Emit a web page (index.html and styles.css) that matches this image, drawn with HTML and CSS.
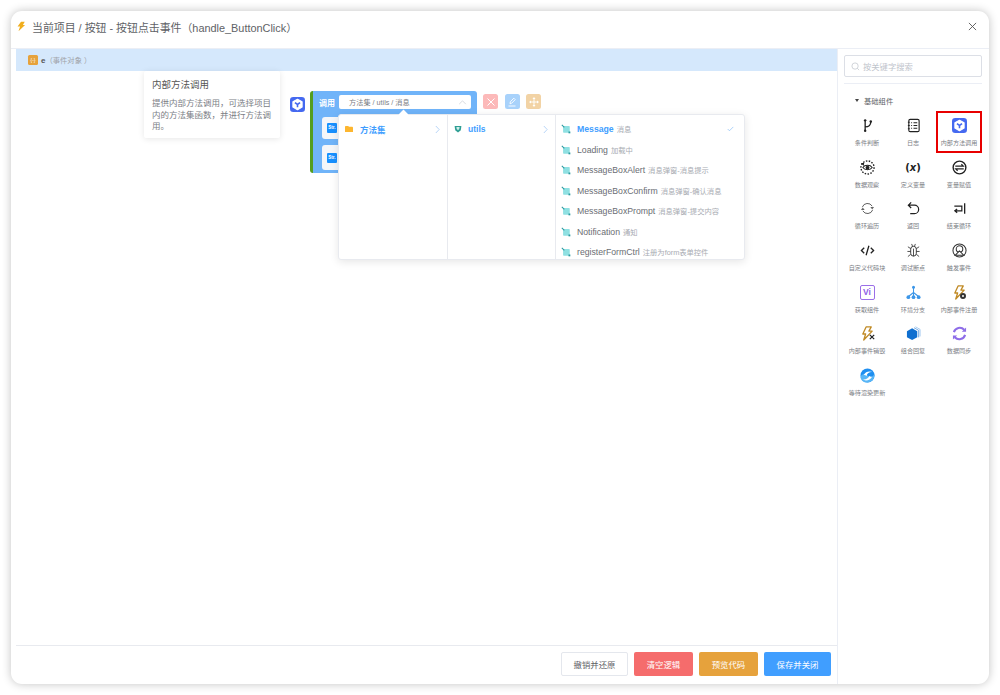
FILE: index.html
```html
<!DOCTYPE html>
<html lang="zh">
<head>
<meta charset="utf-8">
<title>按钮点击事件</title>
<link rel="stylesheet" href="styles.css">
</head>
<body>
<svg class="defs" width="0" height="0">
  <defs>
    <symbol id="logo" viewBox="0 0 16 16">
      <rect width="16" height="16" rx="3.5" fill="#4569f0"/>
      <path d="M8 2.4 12.9 5v5.8L8 13.6 3.1 10.800V5z" fill="#fff" stroke="#fff" stroke-width="1.200" stroke-linejoin="round"/>
      <path d="M5.300 5.900 8 8l2.700-2.100M8 8v3" fill="none" stroke="#4569f0" stroke-width="1.700"/>
    </symbol>
    <symbol id="bolt" viewBox="0 0 16 16">
      <path d="M8 .5h6l-3 5h3.500L4 15.500l2.500-7.500H2.500z" fill="#f0ae1e"/>
    </symbol>
    <symbol id="fn" viewBox="0 0 12 12">
      <rect x="2.500" y="2.500" width="8" height="8" rx=".8" fill="#8fe0e2"/>
      <path d="M1 1 4 4" stroke="#2b9aa0" stroke-width="1.300"/>
      <rect x="9" y="9" width="2.200" height="2.200" fill="#2b9aa0"/>
    </symbol>
    <symbol id="bolt-line" viewBox="0 0 16 16">
      <path d="M6.500 1H12L9.500 5.500H13L4 15l2-6.500H3z" fill="none" stroke="#c08a25" stroke-width="1.400" stroke-linejoin="round"/>
    </symbol>
  </defs>
</svg>

<div class="window">
  <header class="head">
    <svg class="head-bolt"><use href="#bolt"/></svg>
    <span class="head-title">当前项目 / 按钮 - 按钮点击事件（handle_ButtonClick）</span>
    <svg class="head-close" viewBox="0 0 10 10"><path d="M1 1l8 8M9 1l-8 8" stroke="#555" stroke-width="1" fill="none"/></svg>
  </header>

  <div class="body">
    <main class="main">
      <div class="event">
        <span class="event-icon">{-}</span>
        <b class="event-name">e</b>
        <span class="event-desc">（事件对象 ）</span>
      </div>

      <div class="canvas">
        <div class="tip">
          <div class="tip-title">内部方法调用</div>
          <p class="tip-text">提供内部方法调用，可选择项目内的方法集函数，并进行方法调用。</p>
        </div>

        <span class="node-logo"><svg class="logo-svg"><use href="#logo"/></svg></span>

        <div class="block">
          <div class="block-top">
            <span class="block-label">调用</span>
            <div class="select">
              <span>方法集 / utils / 消息</span>
              <svg class="select-arrow" viewBox="0 0 10 6"><path d="M1 5l4-4 4 4" fill="none" stroke="#c6c9cf" stroke-width=".8"/></svg>
            </div>
          </div>
          <div class="param"><span class="str">Str.</span></div>
          <div class="param param-tall"><span class="str">Str.</span></div>
        </div>

        <div class="actions">
          <span class="act act-red"><svg viewBox="0 0 10 10"><path d="M1.500 1.500l7 7M8.500 1.500l-7 7" stroke="#fff" stroke-width="1"/></svg></span>
          <span class="act act-blue"><svg viewBox="0 0 10 10"><path d="M3 6.800l.3-2L6.800 1.200 8.200 2.600 4.700 6.200zM1.500 9h7" stroke="#fff" stroke-width=".9" fill="none"/></svg></span>
          <span class="act act-orange"><svg viewBox="0 0 10 10"><path d="M5 1.500v7M1.500 5h7" stroke="#fff" stroke-width=".9"/><path d="M5 0 6.500 2h-3zM5 10 3.500 8h3zM0 5l2-1.500v3zM10 5 8 3.500v3z" fill="#fff"/></svg></span>
        </div>

        <div class="cascader">
          <span class="caret"></span>
          <ul class="col col-a">
            <li class="c-item active">
              <svg class="folder" viewBox="0 0 10 8"><path d="M0 1a1 1 0 0 1 1-1h3l1 1h4a1 1 0 0 1 1 1v5a1 1 0 0 1-1 1H1a1 1 0 0 1-1-1z" fill="#fdb62f"/></svg>
              <span class="c-name">方法集</span>
              <svg class="chev" viewBox="0 0 6 10"><path d="M1 .8 5 5 1 9.200" fill="none" stroke="#a9cdf5" stroke-width="1"/></svg>
            </li>
          </ul>
          <ul class="col col-b">
            <li class="c-item active">
              <svg class="shield" viewBox="0 0 10 10"><path d="M.8 1.200h8.400L8.500 6.500 5 9.500 1.500 6.500z" fill="#2f9e94"/><path d="M3 2.500h4L6.600 5 5 6.500 3.400 5z" fill="#cfeee9"/></svg>
              <span class="c-name">utils</span>
              <svg class="chev" viewBox="0 0 6 10"><path d="M1 .8 5 5 1 9.200" fill="none" stroke="#a9cdf5" stroke-width="1"/></svg>
            </li>
          </ul>
          <ul class="col col-c">
            <li class="m-item active"><svg class="fn"><use href="#fn"/></svg><span class="m-name">Message</span><span class="m-desc">消息</span><svg class="check" viewBox="0 0 10 8"><path d="M1 4l2.500 2.500L9 1" fill="none" stroke="#7db8f5" stroke-width=".9"/></svg></li>
            <li class="m-item"><svg class="fn"><use href="#fn"/></svg><span class="m-name">Loading</span><span class="m-desc">加载中</span></li>
            <li class="m-item"><svg class="fn"><use href="#fn"/></svg><span class="m-name">MessageBoxAlert</span><span class="m-desc">消息弹窗-消息提示</span></li>
            <li class="m-item"><svg class="fn"><use href="#fn"/></svg><span class="m-name">MessageBoxConfirm</span><span class="m-desc">消息弹窗-确认消息</span></li>
            <li class="m-item"><svg class="fn"><use href="#fn"/></svg><span class="m-name">MessageBoxPrompt</span><span class="m-desc">消息弹窗-提交内容</span></li>
            <li class="m-item"><svg class="fn"><use href="#fn"/></svg><span class="m-name">Notification</span><span class="m-desc">通知</span></li>
            <li class="m-item"><svg class="fn"><use href="#fn"/></svg><span class="m-name">registerFormCtrl</span><span class="m-desc">注册为form表单控件</span></li>
          </ul>
        </div>
      </div>

      <footer class="foot">
        <button class="btn btn-plain">撤销并还原</button>
        <button class="btn btn-red">清空逻辑</button>
        <button class="btn btn-orange">预览代码</button>
        <button class="btn btn-blue">保存并关闭</button>
      </footer>
    </main>

    <aside class="side">
      <div class="search">
        <svg class="search-icon" viewBox="0 0 10 10"><circle cx="4.500" cy="4.500" r="3.500" fill="none" stroke="#c0c4cc" stroke-width=".8"/><path d="M7 7l2 2" stroke="#c0c4cc" stroke-width=".8"/></svg>
        <span>按关键字搜索</span>
      </div>
      <div class="side-title"><i class="tri"></i>基础组件</div>
      <div class="grid">
        <div class="cell">
          <svg class="ic" viewBox="0 0 16 16"><circle cx="5.500" cy="2.500" r="1.300" fill="#222"/><circle cx="5.500" cy="13.500" r="1.300" fill="#222"/><circle cx="11.500" cy="3.800" r="1.300" fill="#222"/><path d="M5.500 3v10M5.500 9.500c3.500 0 6-1.500 6-5.500" fill="none" stroke="#222" stroke-width="1.400"/></svg>
          <span>条件判断</span>
        </div>
        <div class="cell">
          <svg class="ic" viewBox="0 0 16 16"><rect x="3" y="1.500" width="11" height="13" rx="1.500" fill="none" stroke="#222" stroke-width="1.200"/><path d="M5.500 5h1M8 5h4M5.500 8h1M8 8h4M5.500 11h1M8 11h4M2 4.500h2M2 8h2M2 11.500h2" stroke="#222" stroke-width="1.100"/></svg>
          <span>日志</span>
        </div>
        <div class="cell cell-on">
          <svg class="ic"><use href="#logo"/></svg>
          <span>内部方法调用</span>
        </div>

        <div class="cell">
          <svg class="ic" viewBox="0 0 16 16"><circle cx="8" cy="8" r="7" fill="none" stroke="#222" stroke-width="1.500" stroke-dasharray="1.600 1.500"/><path d="M3 8c2-3.200 8-3.200 10 0-2 3.200-8 3.200-10 0z" fill="#fff" stroke="#222" stroke-width="1.100"/><circle cx="8" cy="8" r="2" fill="#222"/><path d="M1 3.500 4.500 3 4 6.500z" fill="#222"/></svg>
          <span>数据观察</span>
        </div>
        <div class="cell">
          <span class="ic ic-text">(<i>x</i>)</span>
          <span>定义变量</span>
        </div>
        <div class="cell">
          <svg class="ic" viewBox="0 0 16 16"><circle cx="8" cy="8" r="6.800" fill="none" stroke="#222" stroke-width="1.500"/><path d="M3.500 6.500h8.500L10 4.500M12.500 9.500H4L6 11.500" fill="none" stroke="#222" stroke-width="1.300"/></svg>
          <span>变量赋值</span>
        </div>

        <div class="cell">
          <svg class="ic" viewBox="0 0 16 16"><path d="M2.500 6.500A5.800 5.800 0 0 1 13 5.500M13.500 9.500A5.800 5.800 0 0 1 3 10.500" fill="none" stroke="#444" stroke-width=".9"/><path d="M11 6.500h4L13 9zM1 9.500h4L3 7z" fill="#666"/></svg>
          <span>循环遍历</span>
        </div>
        <div class="cell">
          <svg class="ic" viewBox="0 0 16 16"><path d="M5.500 1.500 2.500 4.500l3 3M2.800 4.500h6.200a4.500 4.500 0 0 1 0 9H4.500" fill="none" stroke="#222" stroke-width="1.300"/></svg>
          <span>返回</span>
        </div>
        <div class="cell">
          <svg class="ic" viewBox="0 0 16 16"><path d="M13.500 2.500v11" stroke="#222" stroke-width="1.400"/><path d="M2.500 5.500h8v5H3.500M5.500 8.500l-2.500 2 2.500 2" fill="none" stroke="#222" stroke-width="1.300"/></svg>
          <span>结束循环</span>
        </div>

        <div class="cell">
          <svg class="ic" viewBox="0 0 16 16"><path d="M4.500 5 1.500 8l3 3M11.500 5l3 3-3 3M9.500 3l-3 10" fill="none" stroke="#222" stroke-width="1.400"/></svg>
          <span>自定义代码块</span>
        </div>
        <div class="cell">
          <svg class="ic" viewBox="0 0 16 16"><rect x="5" y="3.500" width="6" height="10.500" rx="3" fill="none" stroke="#333" stroke-width="1"/><path d="M6 1 7 3.500M10 1 9 3.500M8 6v8M5 6 2 4M11 6l3-2M5 9H1.500M11 9h3.500M5 12l-3 2.500M11 12l3 2.500" stroke="#333" stroke-width=".9" fill="none"/></svg>
          <span>调试断点</span>
        </div>
        <div class="cell">
          <svg class="ic" viewBox="0 0 16 16"><circle cx="8" cy="8" r="7" fill="none" stroke="#333" stroke-width="1.100"/><circle cx="8" cy="6.500" r="3.500" fill="none" stroke="#333" stroke-width="1.100"/><path d="M8 8.500 3.500 13h9z" fill="#fff" stroke="#333" stroke-width="1.100"/></svg>
          <span>触发事件</span>
        </div>

        <div class="cell">
          <span class="ic ic-vi">Vi</span>
          <span>获取组件</span>
        </div>
        <div class="cell">
          <svg class="ic" viewBox="0 0 16 16"><path d="M8 3v5M8 8 3 12M8 8v4M8 8l5 4" fill="none" stroke="#3c96e8" stroke-width="1.100"/><circle cx="8" cy="2.500" r="1.600" fill="#3c96e8"/><circle cx="2.500" cy="13" r="2" fill="#3c96e8"/><circle cx="8" cy="13" r="2" fill="#3c96e8"/><circle cx="13.500" cy="13" r="2" fill="#3c96e8"/></svg>
          <span>环境分支</span>
        </div>
        <div class="cell">
          <svg class="ic"><use href="#bolt-line"/></svg>
          <span>内部事件注册</span>
          <i class="badge-gear"></i>
        </div>

        <div class="cell">
          <svg class="ic"><use href="#bolt-line"/></svg>
          <span>内部事件销毁</span>
          <svg class="badge-x" viewBox="0 0 6 6"><path d="M.8.8l4.400 4.400M5.200.8.800 5.200" stroke="#222" stroke-width="1.200"/></svg>
        </div>
        <div class="cell">
          <svg class="ic" viewBox="0 0 16 16"><path d="M10 .8l5 2.800v7.500" fill="none" stroke="#8cbcec" stroke-width=".8"/><path d="M8.500 1.800l5 2.800v7.500" fill="none" stroke="#4a90dc" stroke-width=".8"/><path d="M6.500 2.500 12 5.500v6.500L6.500 15 1 12V5.500z" fill="#0f6fd0"/></svg>
          <span>组合回复</span>
        </div>
        <div class="cell">
          <svg class="ic" viewBox="0 0 16 16"><path d="M2 6.500A6.500 6.500 0 0 1 13 4M14 9.500A6.500 6.500 0 0 1 3 12" fill="none" stroke="#8e6de8" stroke-width="2.200"/><path d="M10.500 6H15V1.500zM5.500 10H1v4.500z" fill="#8e6de8"/></svg>
          <span>数据同步</span>
        </div>

        <div class="cell">
          <svg class="ic" viewBox="0 0 16 16"><circle cx="8" cy="8" r="7.500" fill="#1f8ff0"/><path d="M.5 9.500c2-4 5-3.500 7.500-1.500s5 2.500 7.500-1.500c.3 5-3 9-7.500 9S1 13 .5 9.500z" fill="#58b6f6"/><path d="M4 7.500C6 3.500 10 3 14 4.500 10.500 4 8 5 7 8.500 6 7.500 5 7.200 4 7.500z" fill="#fff"/><path d="M2.500 12c3 .8 6-.5 7.500-3.500.8.800 2 1 3 .5-2 4-7 5.500-10.500 3z" fill="#fff"/></svg>
          <span>等待渲染更新</span>
        </div>
      </div>
    </aside>
  </div>
</div>
</body>
</html>
```

FILE: styles.css
```css
* { box-sizing: border-box; }
html, body { margin: 0; height: 100%; }
body {
  padding: 11px;
  background: #fff;
  font-family: "Liberation Sans", "Noto Sans CJK SC", sans-serif;
  color: #606266;
  overflow: hidden;
}
.defs { position: absolute; }
ul { list-style: none; margin: 0; padding: 0; }

.window {
  height: 673px;
  background: #fff;
  border-radius: 11px;
  box-shadow: 0 0 10px rgba(0, 0, 0, .24);
  display: flex;
  flex-direction: column;
  overflow: hidden;
}
.head {
  height: 38px;
  flex: none;
  display: flex;
  align-items: center;
  padding: 0 12px 6px 5px;
  border-bottom: 1px solid #ebeef5;
}
.head-bolt { width: 10px; height: 11px; margin-right: 6px; }
.head-title { font-size: 10.900px; color: #606266; flex: 1; }
.head-close { width: 9px; height: 9px; }

.body { flex: 1; display: flex; min-height: 0; }
.main {
  width: 827px;
  flex: none;
  padding: 0 0 0 5px;
  border-right: 1px solid #ebeef5;
  display: flex;
  flex-direction: column;
}
.event {
  height: 22px;
  flex: none;
  background: #d5e8fc;
  display: flex;
  align-items: center;
  padding-left: 12px;
  font-size: 7.300px;
  color: #a0a3a9;
}
.event-icon {
  width: 10px;
  height: 10px;
  border-radius: 1.500px;
  background: #e6a23c;
  color: #fff;
  font-size: 5px;
  line-height: 10px;
  text-align: center;
  margin-right: 3px;
}
.event-name { color: #555; font-size: 8px; }

.canvas { flex: 1; position: relative; }

.tip {
  position: absolute;
  left: 128px;
  top: 0;
  width: 136px;
  height: 67px;
  background: #fff;
  padding: 7px 8px;
  border-radius: 2px;
  box-shadow: 0 1px 6px rgba(0, 0, 0, .1);
}
.tip-title { font-size: 9.500px; line-height: 13px; color: #555; margin-bottom: 7px; }
.tip-text { margin: 0; font-size: 8.500px; line-height: 11.500px; color: #7b7e85; }

.node-logo {
  position: absolute;
  left: 273px;
  top: 25px;
  width: 17px;
  height: 17px;
  padding: 1px;
  background: #fff;
  border-radius: 3px;
}
.logo-svg { display: block; width: 15px; height: 15px; }

.block {
  position: absolute;
  left: 294px;
  top: 20px;
  width: 167px;
  height: 82px;
  background: #70b4f9;
  border-left: 3px solid #549d1f;
  border-radius: 3px;
  padding: 4px 6px 0 6px;
}
.block-top { display: flex; align-items: center; gap: 4px; height: 14px; color: #fff; margin-bottom: 8px; }
.block-label { font-size: 8px; font-weight: 700; color: #fff; width: 16px; }
.select {
  width: 132px;
  height: 14px;
  background: #fff;
  border-radius: 2px;
  display: flex;
  align-items: center;
  justify-content: space-between;
  padding: 0 4px 0 10px;
  font-size: 7.200px;
  color: #7d8086;
}
.select-arrow { width: 9px; height: 5px; }
.param {
  width: 30px;
  height: 22px;
  background: #f4f6f9;
  border-radius: 3px;
  margin: 0 0 6px 3px;
  padding: 6px 5px;
}
.param-tall { height: 25px; padding-top: 8px; }
.str {
  display: block;
  width: 10px;
  height: 10px;
  background: #1890ff;
  border-radius: 1px;
  color: #fff;
  font-size: 4.500px;
  font-weight: 700;
  line-height: 10px;
  text-align: center;
}

.actions { position: absolute; left: 467px; top: 23px; display: flex; gap: 6.500px; }
.act { width: 15px; height: 15px; border-radius: 2.500px; padding: 2.500px; }
.act svg { display: block; width: 10px; height: 10px; }
.act-red { background: #fcb9b9; }
.act-blue { background: #a8d2fb; }
.act-orange { background: #f2d3a5; }

.cascader {
  position: absolute;
  left: 322px;
  top: 43px;
  width: 407px;
  height: 146px;
  background: #fff;
  border: 1px solid #e8eaef;
  border-radius: 3px;
  box-shadow: 0 2px 8px rgba(0, 0, 0, .1);
  display: flex;
}
.caret {
  position: absolute;
  left: 61px;
  top: -4px;
  width: 7px;
  height: 7px;
  background: #fff;
  transform: rotate(45deg);
}
.col { height: 100%; overflow: hidden; padding-top: 4px; position: relative; }
.col-a { width: 109px; border-right: 1px solid #e8eaef; }
.col-b { width: 108px; border-right: 1px solid #e8eaef; }
.col-c { flex: 1; }
.c-item {
  height: 20px;
  display: flex;
  align-items: center;
  padding: 0 7px 0 6px;
  font-size: 8.500px;
  font-weight: 700;
  color: #409eff;
}
.folder { width: 8px; height: 6.500px; margin-right: 7px; }
.shield { width: 8px; height: 8px; margin-right: 6px; }
.c-name { flex: 1; }
.chev { width: 5px; height: 9px; }
.m-item {
  height: 20.500px;
  display: flex;
  align-items: center;
  padding: 0 10px 0 5px;
  white-space: nowrap;
}
.fn { width: 10px; height: 10px; margin-right: 6px; flex: none; }
.m-name { font-size: 8.700px; color: #6a6d73; }
.m-desc { font-size: 7.300px; color: #a8abb2; margin-left: 3px; }
.m-item.active .m-name { color: #409eff; font-weight: 700; }
.check { width: 7px; height: 6px; margin-left: auto; }

.foot {
  height: 39px;
  flex: none;
  border-top: 1px solid #e8eaef;
  display: flex;
  align-items: flex-start;
  justify-content: flex-end;
  gap: 6px;
  padding: 6px 6px 0 0;
}
.btn {
  height: 24px;
  padding: 0;
  border-radius: 2px;
  border: 1px solid transparent;
  font: 8.400px "Liberation Sans", "Noto Sans CJK SC", sans-serif;
  color: #fff;
}
.btn-plain { width: 67px; background: #fff; border-color: #e4e7ed; color: #606266; }
.btn-red { width: 59px; background: #f56c6c; }
.btn-orange { width: 59px; background: #e6a23c; }
.btn-blue { width: 67px; background: #409eff; }

.side { flex: 1; padding: 6px 7px 0 6px; min-width: 0; }
.search {
  height: 22px;
  border: 1px solid #dcdfe6;
  border-radius: 2px;
  display: flex;
  align-items: center;
  padding-left: 6px;
  font-size: 8.300px;
  color: #c0c4cc;
}
.search-icon { width: 9px; height: 9px; margin-right: 3px; }
.side-title {
  margin-top: 6px;
  border-top: 1px solid #ebeef5;
  height: 34px;
  display: flex;
  align-items: center;
  padding-left: 11px;
  font-size: 7.300px;
  color: #606266;
}
.tri {
  width: 0;
  height: 0;
  margin-right: 5px;
  border: 2.200px solid transparent;
  border-top: 3px solid #444;
  border-bottom: 0;
}
.grid {
  display: grid;
  grid-template-columns: repeat(3, 1fr);
  grid-auto-rows: 41.700px;
  margin-top: -6px;
}
.cell {
  position: relative;
  display: flex;
  flex-direction: column;
  align-items: center;
  padding-top: 7px;
  font-size: 6.100px;
  color: #7b7e85;
  white-space: nowrap;
}
.cell-on { outline: 2px solid #e80000; outline-offset: -2px; }
.ic { display: block; width: 15px; height: 15px; margin-bottom: 5px; flex: none; }
.ic-text { font: 700 10px/15px "DejaVu Sans", sans-serif; color: #222; text-align: center; width: 20px; }
.ic-vi {
  border: 1.200px solid #9b6fe8;
  border-radius: 2px;
  font: 700 8.500px/12.500px "Liberation Sans", sans-serif;
  color: #8e5ee6;
  text-align: center;
}
.badge-gear {
  position: absolute;
  left: 24px;
  top: 15px;
  width: 6px;
  height: 6px;
  border-radius: 50%;
  border: 2px solid #333;
  background: #fff;
}
.badge-x { position: absolute; left: 25px; top: 15px; width: 6px; height: 6px; }
```
